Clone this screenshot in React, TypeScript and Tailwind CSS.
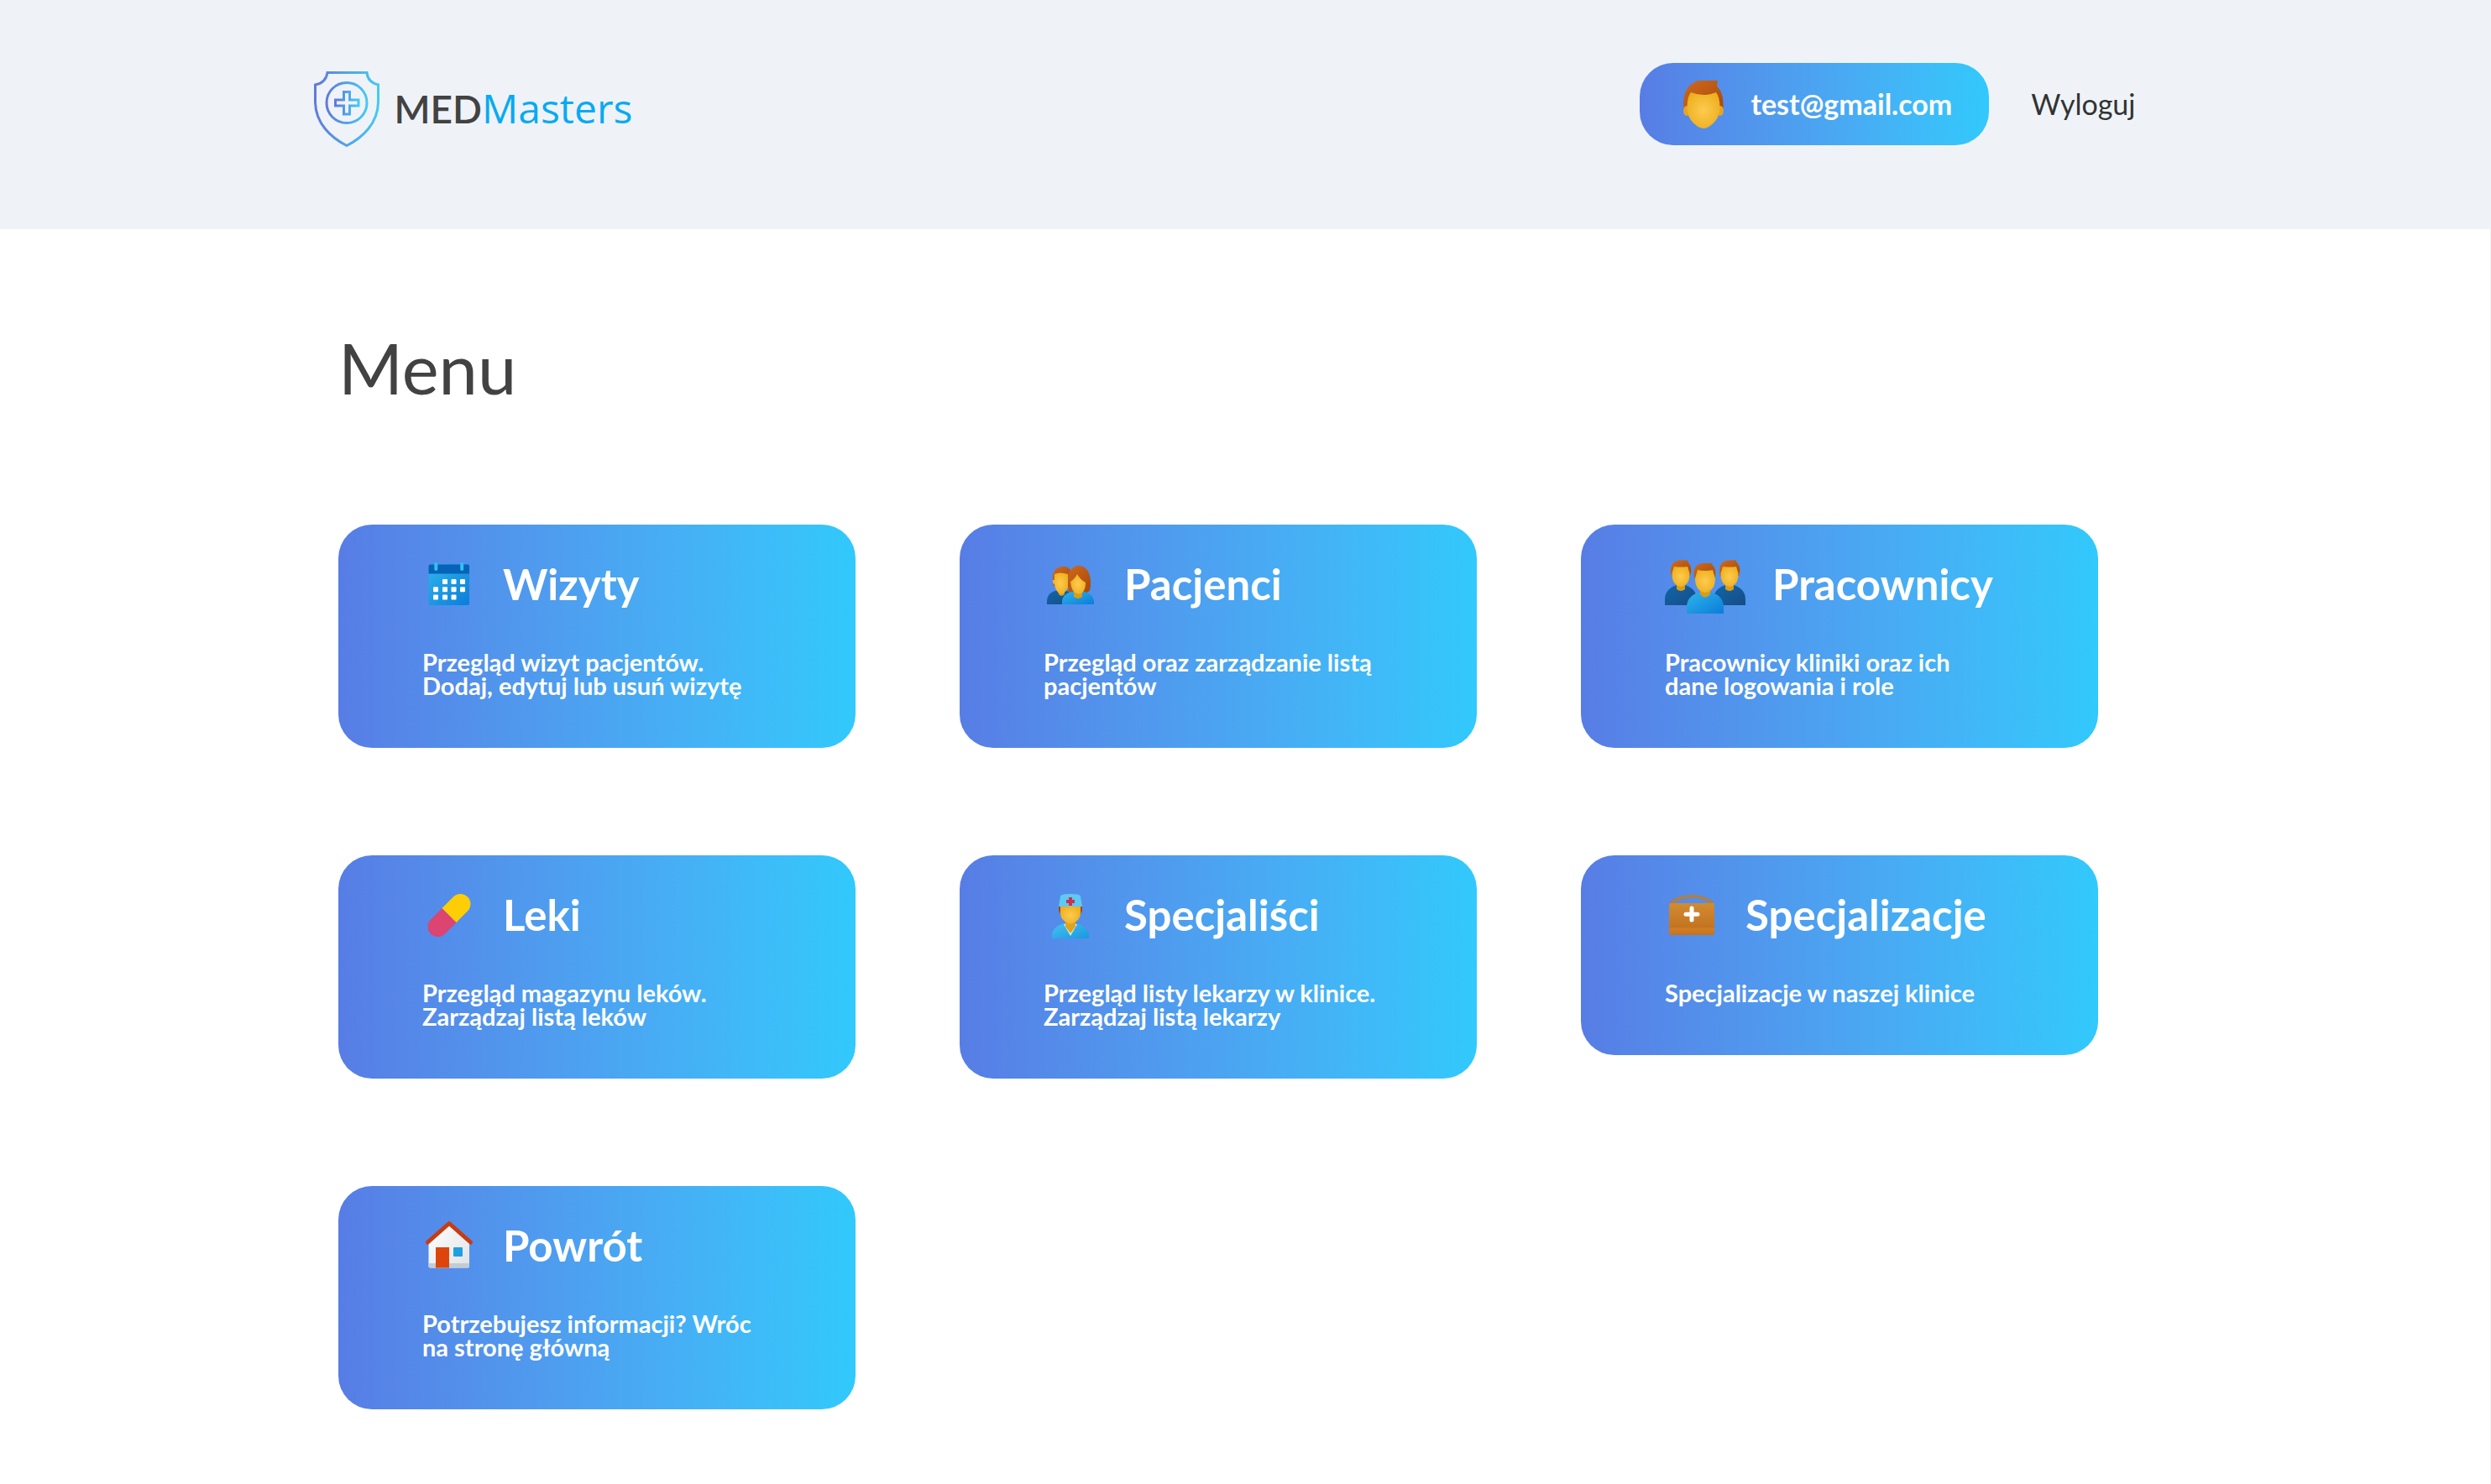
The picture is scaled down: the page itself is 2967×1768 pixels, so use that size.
import type { ReactNode } from 'react';

function Gradients() {
  return (
    <svg className="absolute size-0" aria-hidden="true">
      <defs>
        <radialGradient id="skin" cx="0.5" cy="0.5" r="0.6">
          <stop offset="0" stopColor="#fecb50" />
          <stop offset="1" stopColor="#ecae1c" />
        </radialGradient>
        <linearGradient id="hair" x1="0" y1="0" x2="1" y2="1">
          <stop offset="0" stopColor="#cf6a1c" />
          <stop offset="1" stopColor="#a8470a" />
        </linearGradient>
        <linearGradient id="navy" x1="0" y1="0" x2="1" y2="1">
          <stop offset="0" stopColor="#0f67ab" />
          <stop offset="1" stopColor="#184c84" />
        </linearGradient>
        <linearGradient id="azure" x1="0" y1="0" x2="1" y2="1">
          <stop offset="0" stopColor="#2fb4ec" />
          <stop offset="1" stopColor="#0a7dd8" />
        </linearGradient>
        <linearGradient id="scrubs" x1="0" y1="0" x2="1" y2="1">
          <stop offset="0" stopColor="#4cc0f2" />
          <stop offset="1" stopColor="#1799e0" />
        </linearGradient>
        <linearGradient id="shield" x1="0" y1="0" x2="1" y2="0">
          <stop offset="0" stopColor="#6279dc" />
          <stop offset="1" stopColor="#45caf3" />
        </linearGradient>
        <linearGradient id="bag" x1="0" y1="0" x2="0" y2="1">
          <stop offset="0" stopColor="#d18b31" />
          <stop offset="0.75" stopColor="#c47420" />
          <stop offset="0.8" stopColor="#cf7e25" />
          <stop offset="1" stopColor="#c8701c" />
        </linearGradient>
        <linearGradient id="wall" x1="0" y1="0" x2="1" y2="1">
          <stop offset="0" stopColor="#ffffff" />
          <stop offset="1" stopColor="#dfe2e6" />
        </linearGradient>
      </defs>
    </svg>
  );
}

function Icon({ wide, children }: { wide?: boolean; children: ReactNode }) {
  return (
    <svg
      aria-hidden="true"
      viewBox={wide ? '0 0 96 72' : '0 0 64 64'}
      className={wide ? 'h-[72px] w-24 shrink-0' : 'size-16 shrink-0'}
    >
      {children}
    </svg>
  );
}

const calendarDots = [
  [27, 33], [37.5, 33], [48, 33],
  [16, 42.3], [27, 42.3], [37.5, 42.3], [48, 42.3],
  [16, 51.6], [27, 51.6], [37.5, 51.6],
];

const CalendarIcon = (
  <Icon>
    <rect x="7.5" y="12.5" width="48.5" height="48.5" rx="2" fill="url(#azure)" />
    <path d="M7.5 23.5v-9a2 2 0 0 1 2-2H54a2 2 0 0 1 2 2v9z" fill="#0663b8" />
    <rect x="14.3" y="10" width="4" height="10" rx="2" fill="#35c0f0" />
    <rect x="45.2" y="10" width="4" height="10" rx="2" fill="#35c0f0" />
    {calendarDots.map(([x, y]) => (
      <rect key={`${x}-${y}`} x={x - 3} y={y - 3} width="6" height="6" rx="1" fill="#fff" />
    ))}
  </Icon>
);

const CoupleIcon = (
  <Icon>
    <path d="M4 60V56C4 48 11 43 20 43C30 43 37 48 37 56V60Z" fill="url(#navy)" />
    <path d="M16 40h9v8q-4 4-7 0z" fill="#d89c1c" />
    <path d="M12 38C9 26 11 15 24 15C31 15 34 20 33 30L30 40Z" fill="url(#hair)" />
    <path d="M13 24Q19 21 29 24V40Q24 50 19 47Q14 44 13 36Q10 35 11 31L13 31Z" fill="url(#skin)" />
    <path d="M29 45C31 38 28 32 30 24C32 17 37 14 42 14C52 14 56 24 56 34C56 42 55 46 50 46L33 46Z" fill="url(#hair)" />
    <path d="M22 60V57C22 49 30 44 41 44C52 44 60 49 60 57V60Z" fill="url(#azure)" />
    <path d="M36 42h10v9q-5 4-10 0z" fill="#d89c1c" />
    <path d="M32 33Q37 30 40 24Q44 31 50 34Q50 47 41 48Q33 46 32 33Z" fill="url(#skin)" />
  </Icon>
);

function SidePerson({ cx }: { cx: number }) {
  return (
    <g transform={`translate(${cx} 0)`}>
      <path d="M-19 61V54C-19 44-12 38 0 36C12 38 19 44 19 54V61Z" fill="url(#navy)" />
      <path d="M-5 34H5V42Q0 46-5 42Z" fill="#d89c1c" />
      <path d="M-11 26C-14 16-10 7 0 7.5H8V9C13 14 13 20 11 26Z" fill="url(#hair)" />
      <path d="M-8 15Q0 16 8 15L10.500 23Q11 37 0 39Q-11 37-10.500 23Z" fill="url(#skin)" />
    </g>
  );
}

const TeamIcon = (
  <Icon wide>
    <SidePerson cx={19} />
    <SidePerson cx={77} />
    <path d="M26 71V63C26 52 35 45 48 45C61 45 70 52 70 63V71Z" fill="url(#azure)" />
    <path d="M42 42H54V48Q48 55 42 48Z" fill="#d89c1c" />
    <path d="M36 30C32 18 37 10.5 48 11H56.5V13C61 17 61 24 59 30Z" fill="url(#hair)" />
    <path d="M39 19Q48 21 57 19L60 29Q60 44 48 46Q36 44 36 29Z" fill="url(#skin)" />
  </Icon>
);

const PillIcon = (
  <Icon>
    <g transform="translate(32 36.5) rotate(45)">
      <path d="M-12 0V19a12 12 0 0 0 24 0V0z" fill="#dc4472" />
      <path d="M-12 0V-19a12 12 0 0 1 24 0V0z" fill="#ffcd06" />
    </g>
  </Icon>
);

const DoctorIcon = (
  <Icon>
    <path d="M10 64V60C10 52 19 46 32 45C45 46 54 52 54 60V64Z" fill="url(#scrubs)" />
    <path d="M24 47L32 61L40 47Z" fill="#d5f0f8" />
    <path d="M26 42H38V50L32 58L26 50Z" fill="#dda41f" />
    <path d="M18 26H46V31L43 37H21L18 31Z" fill="#a34a1d" />
    <path d="M20 26H44V34Q44 43 32 47Q20 43 20 34Z" fill="url(#skin)" />
    <path d="M18 26L20 14Q20 11 32 11Q44 11 44 14L46 26Z" fill="#5fc8f5" />
    <path d="M30 15h4v3h3v4h-3v3h-4v-3h-3v-4h3z" fill="#c8354d" />
  </Icon>
);

const BagIcon = (
  <Icon>
    <path d="M7 22Q17 14 32 14Q47 14 57 22" fill="none" stroke="#a87f55" strokeWidth="4" />
    <rect x="5" y="22" width="54" height="38" rx="2" fill="url(#bag)" />
    <path d="M32 28V42M25 35.300H39" stroke="#fff" strokeWidth="5" strokeLinecap="round" />
  </Icon>
);

const HouseIcon = (
  <Icon>
    <path d="M7.5 33L32 10L56 33V60.5a2 2 0 0 1-2 2H9.5a2 2 0 0 1-2-2Z" fill="url(#wall)" />
    <path d="M7.5 57H56V60.5a2 2 0 0 1-2 2H9.5a2 2 0 0 1-2-2Z" fill="#c3ccd6" />
    <rect x="16" y="38" width="16" height="24.5" fill="#dc460d" />
    <rect x="37" y="38" width="11" height="11" rx="1" fill="#1f9fe0" />
    <path d="M6.5 32L32 9.5L57.5 32" fill="none" stroke="#c73c12" strokeWidth="5" strokeLinecap="round" strokeLinejoin="round" />
  </Icon>
);

const AvatarIcon = (
  <Icon>
    <path d="M9 40C6 22 12 11 20 7Q23 4 29 4H49L48 11C53 15 57 25 55 40Z" fill="url(#hair)" />
    <ellipse cx="12" cy="40" rx="4" ry="6" fill="#e6a324" />
    <ellipse cx="52" cy="40" rx="4" ry="6" fill="#e6a324" />
    <path d="M17 18Q32 24 47 18Q52 24 51.5 39Q50 51 40 58Q32 64 24 58Q14 51 12.5 39Q12 24 17 18Z" fill="url(#skin)" />
  </Icon>
);

type Tile = { title: string; lines: string[]; icon: ReactNode };

const tiles: Tile[] = [
  { title: 'Wizyty', lines: ['Przegląd wizyt pacjentów.', 'Dodaj, edytuj lub usuń wizytę'], icon: CalendarIcon },
  { title: 'Pacjenci', lines: ['Przegląd oraz zarządzanie listą', 'pacjentów'], icon: CoupleIcon },
  { title: 'Pracownicy', lines: ['Pracownicy kliniki oraz ich', 'dane logowania i role'], icon: TeamIcon },
  { title: 'Leki', lines: ['Przegląd magazynu leków.', 'Zarządzaj listą leków'], icon: PillIcon },
  { title: 'Specjaliści', lines: ['Przegląd listy lekarzy w klinice.', 'Zarządzaj listą lekarzy'], icon: DoctorIcon },
  { title: 'Specjalizacje', lines: ['Specjalizacje w naszej klinice'], icon: BagIcon },
  { title: 'Powrót', lines: ['Potrzebujesz informacji? Wróc', 'na stronę główną'], icon: HouseIcon },
];

function MenuTile({ title, lines, icon }: Tile) {
  return (
    <a
      href="#"
      className="block rounded-[40px] bg-linear-to-r from-[#577de5] to-[#31c9fc] pt-[35px] pr-8 pb-[60px] pl-[100px] text-white"
    >
      <div className="flex min-h-[72px] items-start gap-8">
        {icon}
        <h2 className="text-[51px] leading-[72px] font-bold whitespace-nowrap">{title}</h2>
      </div>
      <p className="mt-[43px] text-[29px] leading-7 font-bold whitespace-nowrap">
        {lines.map((line) => (
          <span key={line} className="block">{line}</span>
        ))}
      </p>
    </a>
  );
}

function Logo() {
  return (
    <a href="#" className="flex items-start gap-4">
      <svg aria-hidden="true" viewBox="0 0 80 90" className="h-[90px] w-20">
        <g fill="none" stroke="url(#shield)" strokeWidth="3">
          <path d="M16 1.5H63Q64 13 76.5 16V37C76 62 58 79 39 88.5C20 79 2 62 1.5 37V16Q14 14 16 1.5Z" />
          <circle cx="39" cy="37.5" r="24" />
          <path d="M35.500 24.500H42.500V34H53V41H42.500V51H35.500V41H25.500V34H35.500Z" />
        </g>
      </svg>
      <span className="mt-2 flex items-baseline leading-[72px]">
        <span className="text-[46px] font-semibold text-[#424242]">MED</span>
        <span className="font-['Open_Sans',sans-serif] text-5xl leading-[72px] font-medium text-[#08aaf2]">Masters</span>
      </span>
    </a>
  );
}

export default function App() {
  return (
    <div className="flex min-h-screen flex-col bg-white font-['Lato',sans-serif]">
      <Gradients />
      <header className="bg-[#eff3f8]">
        <div className="mx-auto flex max-w-[2220px] items-start justify-between pt-[75px] pr-[50px] pb-[98px]">
          <div className="pt-[10px]">
            <Logo />
          </div>
          <nav className="flex items-center gap-[50px] text-[34px] leading-10">
            <a
              href="#"
              className="flex h-[98px] items-center gap-6 rounded-[40px] bg-linear-to-r from-[#577de5] to-[#31c9fc] px-11 font-bold text-white"
            >
              {AvatarIcon}
              <span>test@gmail.com</span>
            </a>
            <a href="#" className="text-[#333]">Wyloguj</a>
          </nav>
        </div>
      </header>
      <main className="flex-1 border-r border-[#f1f1f1]">
        <div className="mx-auto max-w-[2160px] pt-[125px] pr-16 pb-20">
          <h1 className="text-[83px] leading-20 text-[#424242]">Menu</h1>
          <div className="mt-[147px] grid grid-cols-3 items-start gap-x-[124px] gap-y-32">
            {tiles.map((tile) => (
              <MenuTile key={tile.title} {...tile} />
            ))}
          </div>
        </div>
      </main>
    </div>
  );
}
